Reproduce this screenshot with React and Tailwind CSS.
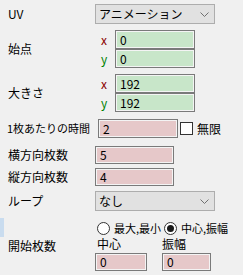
import React from "react";

const font = { fontFamily: '"Noto Sans CJK JP", "Liberation Sans", sans-serif' };

// Drop-down like a WinForms combo box
const Combo = ({ value }) => (
  <div className="w-[120px] h-[20px] bg-[#e1e1e1] border border-[#adadad] flex items-center justify-between pl-[3px] pr-[5px] text-[12px] leading-none text-black">
    <span>{value}</span>
    <svg width="9" height="5" viewBox="0 0 9 5" className="text-[#707070]">
      <path d="M0.5 0.5 L4.5 4.5 L8.5 0.5" fill="none" stroke="currentColor" strokeWidth="1" />
    </svg>
  </div>
);

const Field = ({ value, color, w = "w-[80px]", h = "h-[19px]" }) => (
  <div
    className={`${w} ${h} border border-[#7a7a7a] shadow-[inset_0_0_0_1px_#f4f4f4] flex items-center pl-[4px] text-[12px] leading-none text-black ${
      color === "green" ? "bg-[#c8e6c9]" : "bg-[#e6c8c9]"
    }`}
  >
    {value}
  </div>
);

const XY = ({ x, y }) => (
  <div className="flex flex-col">
    <div className="flex items-center">
      <span className="w-[20px] pl-[6px] text-[12px] leading-none text-[#8b0000]">x</span>
      <Field value={x} color="green" />
    </div>
    <div className="flex items-center">
      <span className="w-[20px] pl-[6px] text-[12px] leading-none text-[#008000]">y</span>
      <Field value={y} color="green" />
    </div>
  </div>
);

const Radio = ({ checked, label }) => (
  <div className="flex items-center gap-[4px]">
    <div className="w-[13px] h-[13px] rounded-full border border-[#333333] bg-white flex items-center justify-center">
      {checked && <div className="w-[7px] h-[7px] rounded-full bg-[#1a1a1a]" />}
    </div>
    <span className="text-[11px] leading-none">{label}</span>
  </div>
);

export default function App() {
  return (
    <div style={font} className="w-[243px] h-[275px] bg-[#f0f0f0] text-black overflow-hidden">
      {/* UV */}
      <div className="flex items-center mt-[4px]">
        <span className="w-[95px] pl-[8px] text-[12px] leading-none">UV</span>
        <Combo value="アニメーション" />
      </div>

      {/* 始点 */}
      <div className="flex items-center mt-[6px]">
        <span className="w-[95px] pl-[8px] text-[12px] leading-none">始点</span>
        <XY x="0" y="0" />
      </div>

      {/* 大きさ */}
      <div className="flex items-center mt-[6px]">
        <span className="w-[95px] pl-[8px] text-[12px] leading-none">大きさ</span>
        <XY x="192" y="192" />
      </div>

      {/* 1枚あたりの時間 */}
      <div className="flex items-center mt-[7px]">
        <span className="w-[98px] pl-[7px] text-[11px] leading-none whitespace-nowrap">1枚あたりの時間</span>
        <Field value="2" color="pink" />
        <div className="ml-[2px] w-[13px] h-[13px] border border-[#333333] bg-white" />
        <span className="ml-[4px] text-[12px] leading-none">無限</span>
      </div>

      {/* 横方向枚数 */}
      <div className="flex items-center mt-[8px]">
        <span className="w-[95px] pl-[8px] text-[12px] leading-none">横方向枚数</span>
        <Field value="5" color="pink" w="w-[79px]" h="h-[18px]" />
      </div>

      {/* 縦方向枚数 */}
      <div className="flex items-center mt-[4px]">
        <span className="w-[95px] pl-[8px] text-[12px] leading-none">縦方向枚数</span>
        <Field value="4" color="pink" w="w-[79px]" h="h-[18px]" />
      </div>

      {/* ループ */}
      <div className="flex items-center mt-[5px]">
        <span className="w-[95px] pl-[8px] text-[12px] leading-none">ループ</span>
        <Combo value="なし" />
      </div>

      {/* 開始枚数 */}
      <div className="flex mt-[7px]">
        <div className="w-[95px] flex flex-col">
          <div className="w-[4px] h-[19px] bg-[#c9dcef]" />
          <span className="pl-[8px] mt-[3px] text-[12px] leading-none">開始枚数</span>
        </div>
        <div className="flex flex-col">
          <div className="flex items-center mt-[4px] ml-[2px] gap-[3px]">
            <Radio label="最大,最小" />
            <Radio checked label="中心,振幅" />
          </div>
          <div className="flex mt-[3px] text-[12px] leading-none">
            <span className="w-[67px] pl-[2px]">中心</span>
            <span>振幅</span>
          </div>
          <div className="flex mt-[3px] gap-[15px]">
            <Field value="0" color="pink" w="w-[52px]" h="h-[18px]" />
            <Field value="0" color="pink" w="w-[49px]" h="h-[18px]" />
          </div>
        </div>
      </div>
    </div>
  );
}
